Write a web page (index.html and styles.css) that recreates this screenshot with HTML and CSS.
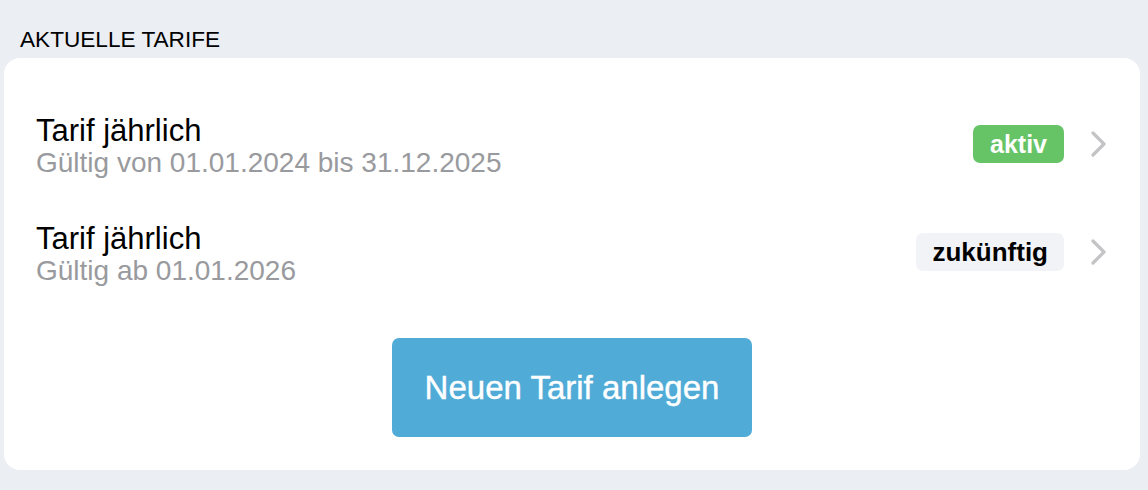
FILE: index.html
```html
<!DOCTYPE html>
<html lang="de">
<head>
    <meta charset="UTF-8">
    <meta name="viewport" content="width=device-width, initial-scale=1.0">
    <title>Aktuelle Tarife</title>
    <link rel="stylesheet" href="styles.css">
</head>
<body>

<div class="section-title">AKTUELLE TARIFE</div>

<div class="tariff-card">
    <div class="tariff-row">
        <div class="tariff-text">
            <div class="tariff-name">Tarif jährlich</div>
            <div class="tariff-range">Gültig von 01.01.2024 bis 31.12.2025</div>
        </div>
        <span class="badge badge-active">aktiv</span>
        <svg class="chevron" width="18" height="26" viewBox="0 0 18 26"><path d="M3 2 L14 13 L3 24" fill="none" stroke="#c4c4c7" stroke-width="3.2" stroke-linecap="round" stroke-linejoin="round"/></svg>
    </div>
    <div class="tariff-row">
        <div class="tariff-text">
            <div class="tariff-name">Tarif jährlich</div>
            <div class="tariff-range">Gültig ab 01.01.2026</div>
        </div>
        <span class="badge badge-future">zukünftig</span>
        <svg class="chevron" width="18" height="26" viewBox="0 0 18 26"><path d="M3 2 L14 13 L3 24" fill="none" stroke="#c4c4c7" stroke-width="3.2" stroke-linecap="round" stroke-linejoin="round"/></svg>
    </div>
    <div class="actions">
        <button type="button" class="btn-new">Neuen Tarif anlegen</button>
    </div>
</div>

</body>
</html>
```

FILE: styles.css
```css
body { margin: 0; padding: 0 8px 0 4px; background-color: #ebeef3; font-family: "Liberation Sans", Arial, sans-serif; color: #000; }
.section-title { margin-top: 27px; padding-left: 16px; font-size: 22.6px; line-height: 26px; height: 26px; margin-bottom: 5px; }
.tariff-card { background-color: #fff; border-radius: 16px; padding: 32px 32px 33px 32px; }
.tariff-row { display: flex; align-items: center; height: 108px; }
.tariff-text { flex: 1; padding-top: 4px; }
.tariff-name { font-size: 31px; line-height: 33px; }
.tariff-range { font-size: 28px; line-height: 32px; color: #999a9e; }
.badge { font-weight: bold; height: 38px; line-height: 38px; padding: 0 16px; border-radius: 7px; }
.badge-active { background-color: #66c466; color: #fff; padding: 0 17px; font-size: 25px; }
.badge-future { background-color: #f2f3f7; color: #000; font-size: 26px; }
.chevron { margin-left: 26px; }
.actions { display: flex; justify-content: center; padding-top: 32px; }
.btn-new { width: 360px; height: 99px; background-color: #50abd7; color: #fff; border: none; border-radius: 7px; font-family: "Liberation Sans", Arial, sans-serif; font-size: 33px; -webkit-text-stroke: 0.4px #fff; cursor: pointer; }
```
